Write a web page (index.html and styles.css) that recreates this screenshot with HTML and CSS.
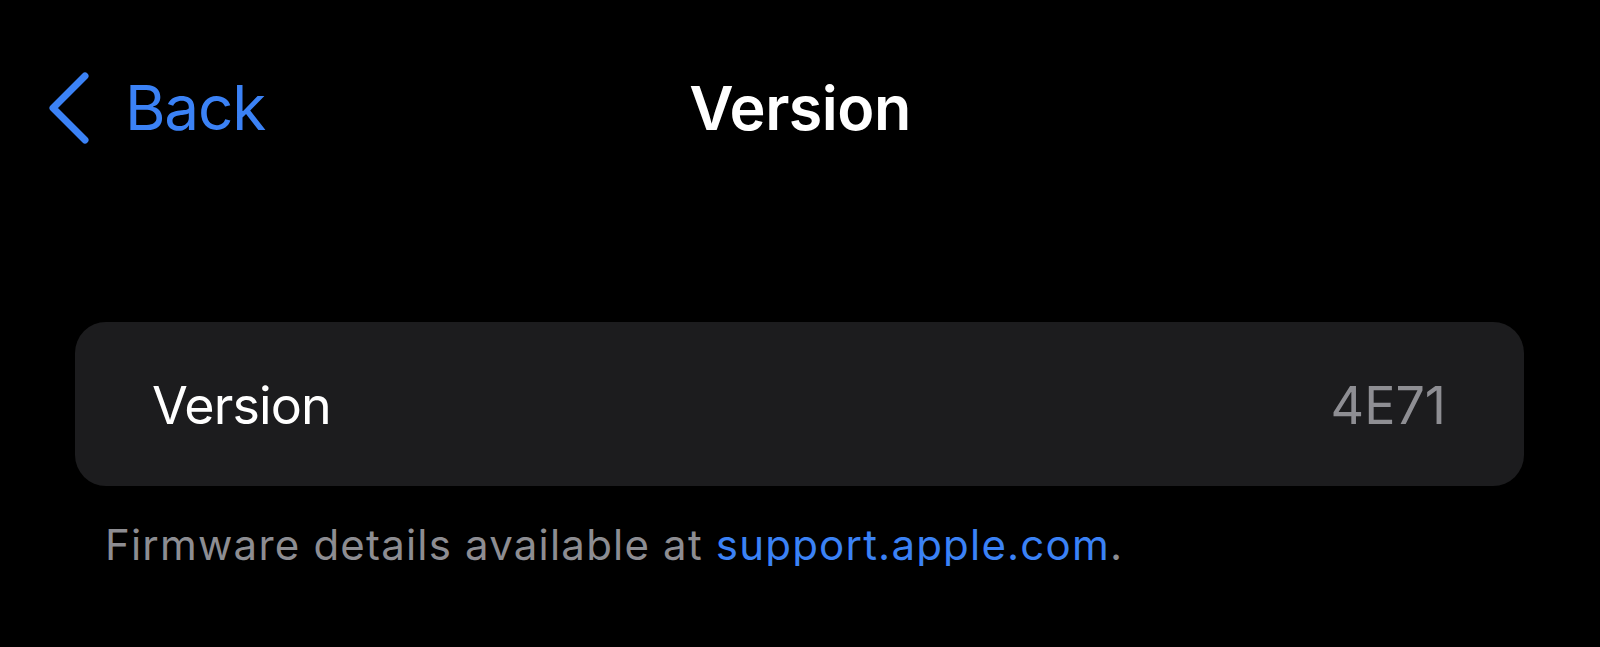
FILE: index.html
```html
<!DOCTYPE html>
<html lang="en">
<head>
  <meta charset="UTF-8" />
  <meta name="viewport" content="width=device-width, initial-scale=1.0"/>
  <title>Version</title>
  <link rel="stylesheet" href="styles.css">
</head>
<body>
  <div class="nav">
    <a class="back" href="#">
      <svg class="chevron" width="44" height="72" viewBox="0 0 44 72">
        <path d="M38 4 L6 36 L38 68" fill="none" stroke="currentColor" stroke-width="7" stroke-linecap="round" stroke-linejoin="round"/>
      </svg>
      <span>Back</span>
    </a>
    <h1 class="title">Version</h1>
    <div></div>
  </div>

  <div class="card">
    <span class="label">Version</span>
    <span class="value">4E71</span>
  </div>

  <p class="footer">Firmware details available at <a href="#">support.apple.com</a>.</p>
</body>
</html>
```

FILE: styles.css
```css
body {
  margin: 0;
  background: #000;
  color: #fff;
  font-family: Inter, "Noto Sans", sans-serif;
}

.nav {
  display: grid;
  grid-template-columns: 1fr auto 1fr;
  align-items: center;
  height: 216px;
  padding: 0 47px;
}

.back {
  display: flex;
  align-items: center;
  gap: 34px;
  color: #3b82f6;
  text-decoration: none;
  font-size: 62px;
  line-height: 1;
  letter-spacing: -1.2px;
}

.chevron {
  display: block;
}

.title {
  margin: 0;
  font-size: 61px;
  font-weight: 600;
  line-height: 1;
  letter-spacing: -0.5px;
}

.card {
  display: flex;
  justify-content: space-between;
  align-items: center;
  box-sizing: border-box;
  height: 164px;
  margin: 106px 76px 0 75px;
  padding: 3px 78px 0 77px;
  background: #1c1c1e;
  border-radius: 31px;
  font-size: 52px;
  line-height: 1;
}

.label {
  letter-spacing: -0.9px;
}

.value {
  color: #8e8e93;
}

.footer {
  margin: 38px 0 0 105px;
  color: #8d8d92;
  font-size: 42px;
  line-height: 1;
  letter-spacing: 1.2px;
}

.footer a {
  color: #3b82f6;
  text-decoration: none;
}
```
